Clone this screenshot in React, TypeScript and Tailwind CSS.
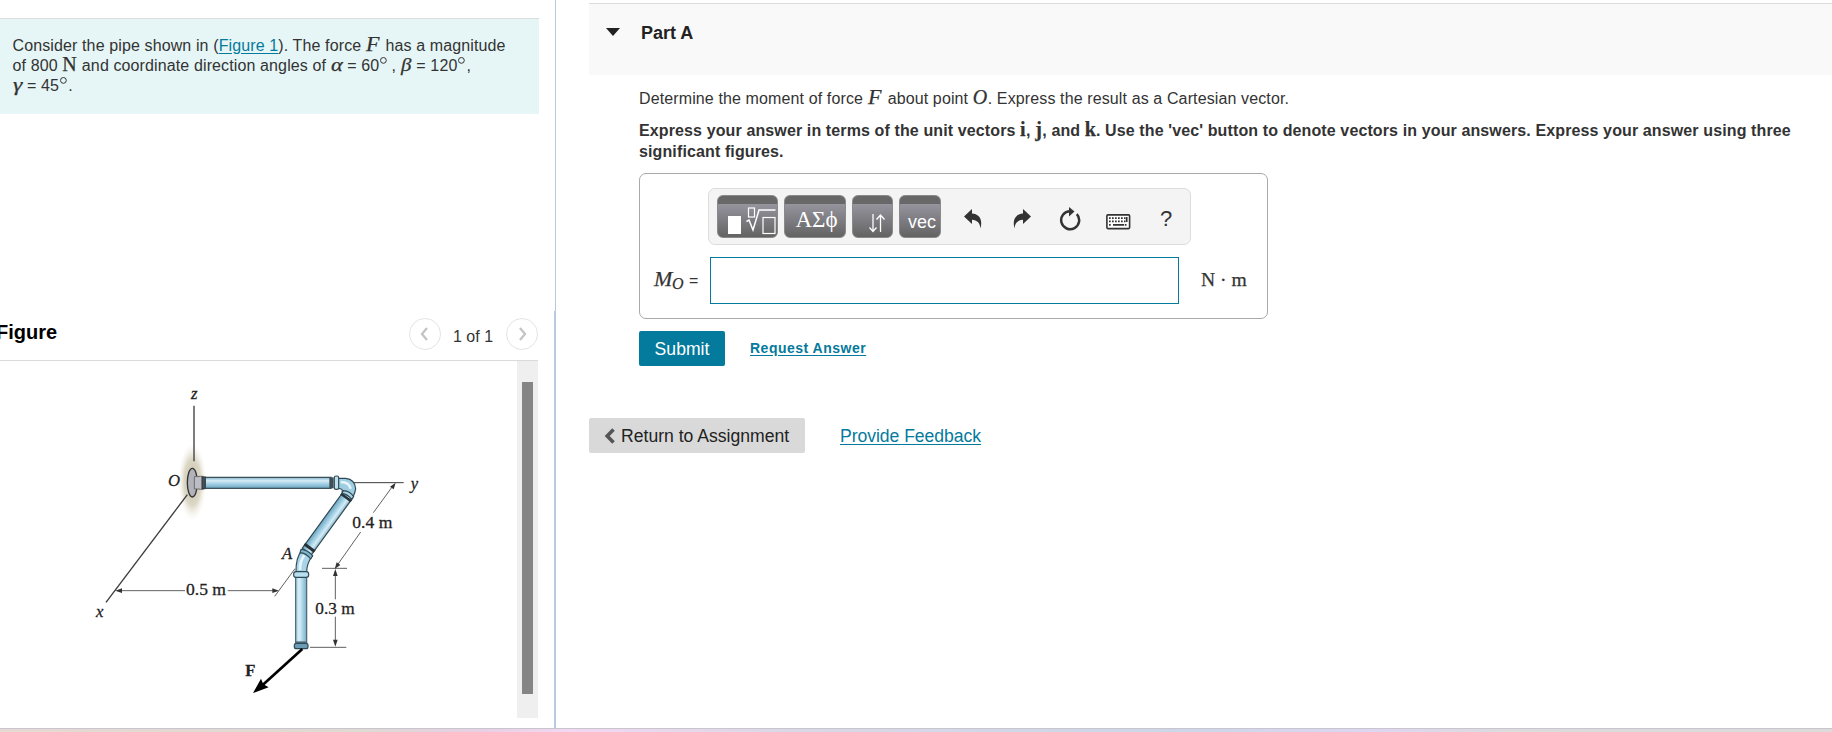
import type { ReactNode } from "react";

interface MathProps { children: ReactNode; className?: string; }

// 수식 글자 (세리프)
function M({ children, className = "" }: MathProps) {
  return (
    <span className={`inline-block whitespace-nowrap leading-[18px] tracking-normal font-['Liberation_Serif',serif] [-webkit-text-stroke:0.25px_#333] ${className}`}>
      {children}
    </span>
  );
}

function Deg() {
  return (
    <svg className="inline-block h-[14px] w-[9px] align-baseline" viewBox="0 0 9 14">
      <circle cx="4.4" cy="3.4" r="2.9" fill="none" stroke="#333" strokeWidth="1" />
    </svg>
  );
}

function PagerButton({ d }: { d: string }) {
  return (
    <button className="flex size-8 items-center justify-center rounded-full border border-[#e4e4e4]">
      <svg width="16" height="16" viewBox="0 0 16 16" fill="none" stroke="#c4c4c4" strokeWidth="2.3">
        <path d={d} />
      </svg>
    </button>
  );
}

function PipeFigure() {
  return (
    <svg width="360" height="340" viewBox="0 0 1080 1020" className="ml-20 mt-[9px] block">
      <defs>
        <linearGradient id="pipeH" x1="0" y1="0" x2="0" y2="1">
          <stop offset="0" stopColor="#7fb2cb" />
          <stop offset="0.3" stopColor="#d6ecf6" />
          <stop offset="0.55" stopColor="#a9d4e8" />
          <stop offset="1" stopColor="#6aa5c1" />
        </linearGradient>
        <linearGradient id="pipeV" x1="0" y1="0" x2="1" y2="0">
          <stop offset="0" stopColor="#9cc9de" />
          <stop offset="0.3" stopColor="#dcf0f8" />
          <stop offset="0.6" stopColor="#aed7e9" />
          <stop offset="1" stopColor="#76aec8" />
        </linearGradient>
        <radialGradient id="wall">
          <stop offset="0" stopColor="#c4bd9f" />
          <stop offset="0.6" stopColor="#d6d1bc" stopOpacity="0.85" />
          <stop offset="1" stopColor="#f0eee4" stopOpacity="0" />
        </radialGradient>
      </defs>

      {/* 벽 음영 */}
      <ellipse cx="337" cy="336" rx="42" ry="116" fill="url(#wall)" />

      {/* 좌표축 */}
      <g stroke="#3c3c3c" strokeWidth="4" fill="none">
        <path d="M342 107V274" />
        <path d="M322 374L78 697" />
        <path d="M820 338H971" strokeWidth="3" />
      </g>

      {/* 치수선 */}
      <g stroke="#555" strokeWidth="2.8" fill="none">
        <path d="M112 662H315M443 662H590" />
        <path d="M645 596L584 679" />
        <path d="M940 346L880 428M842 486L770 588" />
        <path d="M726 595H801M690 832H799" />
        <path d="M766 604V688M766 740V822" />
      </g>
      <g fill="#333">
        <path d="M106 662L126 655V669Z" />
        <path d="M597 662L577 655V669Z" />
        <path d="M947 338L930 350L941 358Z" />
        <path d="M764 597L781 585L770 577Z" />
        <path d="M766 597L759 618H773Z" />
        <path d="M766 830L759 809H773Z" />
      </g>

      {/* 벽 플랜지 */}
      <g stroke="#333" strokeWidth="4">
        <ellipse cx="337" cy="338" rx="15" ry="43" fill="#b2b3ba" />
        <path d="M343 320Q352 320 362 319L370 319V358L362 358Q352 356 343 357Z" fill="#bdbec5" stroke="#6a6c72" strokeWidth="3" />
        <rect x="366" y="321" width="10" height="35" fill="#465259" strokeWidth="3" />
      </g>

      {/* 수평 파이프 */}
      <rect x="376" y="322" width="377" height="33" fill="url(#pipeH)" stroke="#33474f" strokeWidth="3.5" />
      <rect x="748" y="322" width="13" height="33" fill="#3f4f57" />

      {/* 사선 파이프 */}
      <g transform="translate(803 376) rotate(126)">
        <rect x="0" y="-17" width="208" height="34" fill="url(#pipeH)" stroke="#33474f" strokeWidth="3.5" />
        <rect x="4" y="-19" width="8" height="38" fill="#273238" />
        <rect x="190" y="-19" width="9" height="38" fill="#273238" />
      </g>

      {/* 위쪽 엘보 */}
      <g stroke="#2f4a57" strokeWidth="3.5" strokeLinejoin="round">
        <path d="M774 325H797Q825 328 827 356Q826 366 819 381L786 366Q791 356 774 355Z" fill="#9fcee3" />
        <rect x="763" y="318" width="13" height="40" rx="5" fill="#bfe1ef" />
        <path d="M790 362Q810 363 821 380L815 388Q804 373 786 370Z" fill="#a9d3e5" />
      </g>
      <path d="M782 336Q808 337 812 356" fill="none" stroke="#e5f5fb" strokeWidth="8" />

      {/* A 지점 엘보 */}
      <g stroke="#2f4a57" strokeWidth="3.5" strokeLinejoin="round">
        <path d="M665 543Q647 562 648 607H680Q680 580 697 558Z" fill="#a9d4e8" />
        <path d="M663 538Q681 538 698 557L692 567Q678 549 660 548Z" fill="#7fb5cd" />
      </g>
      <path d="M673 556Q659 575 660 600" fill="none" stroke="#e5f5fb" strokeWidth="8" />

      {/* 수직 파이프 */}
      <rect x="647" y="618" width="33" height="205" fill="url(#pipeV)" stroke="#4a6270" strokeWidth="3.5" />
      <rect x="641" y="605" width="45" height="17" rx="7" fill="#b9deed" stroke="#2f4a57" strokeWidth="3.5" />
      <rect x="648" y="814" width="31" height="7" fill="#56717e" />
      <rect x="643" y="820" width="41" height="16" rx="6" fill="#6c9cb4" stroke="#2f4a57" strokeWidth="3.5" />

      {/* 힘 F */}
      <path d="M667 837L548 945" stroke="#000" strokeWidth="8" />
      <path d="M519 969L543 926L550 943L566 952Z" fill="#000" />

      <g fontFamily="'Liberation Serif', serif" fontSize="50" fill="#222" stroke="#222" strokeWidth="0.8">
        <text x="817" y="474" textLength="120" lengthAdjust="spacingAndGlyphs">0.4 m</text>
        <text x="318" y="676" textLength="120" lengthAdjust="spacingAndGlyphs">0.5 m</text>
        <text x="706" y="732" textLength="118" lengthAdjust="spacingAndGlyphs">0.3 m</text>
        <g fontStyle="italic">
          <text x="333" y="87">z</text>
          <text x="264" y="348">O</text>
          <text x="992" y="356">y</text>
          <text x="606" y="566">A</text>
          <text x="48" y="742">x</text>
        </g>
        <text x="496" y="918" fontWeight="bold">F</text>
      </g>
    </svg>
  );
}

const keyClass = "flex h-[43px] items-end overflow-hidden rounded-[6px] border border-[#8a8a8a] bg-[linear-gradient(to_bottom,#686868_0px,#686868_8px,#96949e_8px,#636363_100%)] text-white";

function Toolbar() {
  return (
    <div className="flex h-[57px] w-[483px] items-start rounded-[7px] border border-[#dcdcdc] bg-[#f4f4f4] pl-[8px] pt-[6px] text-[#333]">
      <button className={`${keyClass} w-[61px]`}>
        <svg width="59" height="41" viewBox="0 0 59 41" fill="none" stroke="#fff">
          <rect x="10" y="20" width="13" height="18" fill="#fff" stroke="none" />
          <rect x="30.5" y="12" width="6" height="9" strokeWidth="1.2" />
          <path d="M28.5 25.5L31 24L35 34L41 14H57.5" strokeWidth="1.5" />
          <rect x="45" y="21.5" width="12" height="16" strokeWidth="1.2" />
        </svg>
      </button>
      <button className={`${keyClass} ml-[6px] w-[62px] justify-center pb-[5px] pl-[3px]`}>
        <span className="font-['Liberation_Serif',serif] text-[23px] leading-[24px]">ΑΣϕ</span>
      </button>
      <button className={`${keyClass} ml-[6px] w-[41px]`}>
        <svg width="39" height="41" viewBox="0 0 39 41" fill="none" stroke="#fff" strokeWidth="1.3">
          <path d="M20 18V35M16.5 31.5L20 35.5L23.5 31.5M27.5 36V19M23.5 23.5L27.5 19L31.5 23.5" />
        </svg>
      </button>
      <button className={`${keyClass} ml-[6px] w-[42px] pb-[4px] pl-[8px]`}>
        <span className="font-['Liberation_Sans',sans-serif] text-[18px] leading-[22px]">vec</span>
      </button>
      <svg width="18" height="20" viewBox="0 0 18 20" fill="#333" className="ml-[23px] mt-[14px]">
        <path d="M0 7.5L8 0V4.5C15 5 19 10 16.5 19.5C16 14 13 11 8 10.8V15Z" />
      </svg>
      <svg width="18" height="20" viewBox="0 0 18 20" fill="#333" className="ml-[31px] mt-[14px]">
        <path d="M18 7.5L10 0V4.5C3 5 -1 10 1.5 19.5C2 14 5 11 10 10.8V15Z" />
      </svg>
      <svg width="22" height="24" viewBox="0 0 22 24" className="ml-[28px] mt-[12px]">
        <path d="M17.8 7.1A9 9 0 1 1 11 4.2" fill="none" stroke="#333" strokeWidth="2.5" />
        <path d="M10 0L15.5 4.4L10 9.5Z" fill="#333" />
      </svg>
      <svg width="25" height="16" viewBox="0 0 25 16" className="ml-[25px] mt-[19px]">
        <rect x="0.9" y="0.9" width="22.7" height="13.7" rx="1" fill="#fff" stroke="#333" strokeWidth="1.6" />
        <path d="M3 4.2H19.5M3 7.4H19.5M3 10.8H5.5M18.8 10.8H21.5" stroke="#333" strokeWidth="1.7" strokeDasharray="1.7 1.3" />
        <path d="M7 10.8H18M20.7 3V8" stroke="#333" strokeWidth="1.7" />
      </svg>
      <span className="ml-[29px] mt-[10px] font-['Liberation_Sans',sans-serif] text-[22px] leading-[28px]">?</span>
    </div>
  );
}

export default function App() {
  return (
    <div className="flex h-[732px] w-[1832px] flex-col overflow-hidden bg-white font-['Liberation_Sans',Arial,sans-serif] text-[16px] text-[#333]">
      <div className="flex h-[728px]">
        {/* 왼쪽: 문제 + 그림 */}
        <div className="w-[554px] shrink-0">
          <div className="h-[311px] pt-[18px]">
            <div className="h-[96px] w-[539px] border-t border-[#dadddd] bg-[#e6f6f6] pl-[12.5px] pt-[16px] leading-[20px] tracking-[0.12px]">
              <div className="h-[20px] whitespace-nowrap">
                Consider the pipe shown in (<a className="text-[#047a9c] underline underline-offset-2">Figure 1</a>). The force <M className="w-[15px] origin-left scale-x-110 text-[20px] italic">F</M> has a magnitude
              </div>
              <div className="h-[21px] whitespace-nowrap">
                of 800 <M className="w-[15px] text-[20px]">N</M> and coordinate direction angles of <M className="w-[12px] origin-left scale-x-125 text-[18px] italic">α</M> = 60<Deg />&thinsp;, <M className="w-[11px] origin-left scale-x-110 text-[19px] italic">β</M> = 120<Deg />,
              </div>
              <div className="h-[20px] whitespace-nowrap">
                <M className="w-[10px] origin-left scale-x-125 text-[19px] italic">γ</M> = 45<Deg />.
              </div>
            </div>
          </div>
          <div className="flex h-[50px] w-[538px] justify-between border-b border-[#dadada] pt-[7px]">
            <h2 className="-ml-[4px] mt-[2px] text-[20px] font-bold leading-[24px] text-black">Figure</h2>
            <div className="flex">
              <PagerButton d="M10 2L5 8L10 14" />
              <span className="mx-[12px] mt-[9px] w-[41px] whitespace-nowrap leading-[20px]">1 of 1</span>
              <PagerButton d="M6 2L11 8L6 14" />
            </div>
          </div>
          <div className="flex h-[357px] w-[538px] justify-between">
            <PipeFigure />
            <div className="w-[21px] bg-[#efefef] pl-[5px] pt-[21px]">
              <div className="h-[312px] w-[11px] bg-[#858585]" />
            </div>
          </div>
        </div>

        {/* 구분선 */}
        <div className="flex w-[2px] shrink-0 flex-col items-end">
          <div className="h-[311px] w-px bg-[#b8c9dd]" />
          <div className="w-[2px] flex-1 bg-[#b8cbdf]" />
        </div>

        {/* 오른쪽: Part A */}
        <div className="flex-1 pl-[33px] pt-[3px]">
          <div className="flex h-[72px] border-t border-[#dcdcdc] bg-[#f9f9f9] pl-[17px]">
            <svg width="14" height="8" viewBox="0 0 14 8" className="mt-[24px]"><path d="M0 0H14L7 8Z" fill="#222" /></svg>
            <h1 className="ml-[21px] mt-[18px] text-[18px] font-bold leading-[22px] text-[#222]">Part A</h1>
          </div>
          <div className="pl-[50px]">
            <div className="mt-[13px] h-[20px] whitespace-nowrap leading-[20px] tracking-[0.12px]">
              Determine the moment of force <M className="w-[15.5px] origin-left scale-x-110 text-[20px] italic">F</M> about point <M className="w-[15px] text-[20px] italic">O</M>. Express the result as a Cartesian vector.
            </div>
            <div className="mt-[12px] h-[43px] whitespace-nowrap font-bold leading-[20px] tracking-[0.12px]">
              <div className="h-[22px]">
                Express your answer in terms of the unit vectors <M className="w-[6px] text-[20px]">i</M>, <M className="w-[7px] text-[20px]">j</M>, and <M className="text-[20px]">k</M>. Use the 'vec' button to denote vectors in your answers. Express your answer using three
              </div>
              <div className="h-[21px]">significant figures.</div>
            </div>
            <div className="mt-[10px] h-[146px] w-[629px] rounded-[7px] border border-[#a9a9a9] pt-[14px]">
              <div className="pl-[68px]"><Toolbar /></div>
              <div className="mt-[12px] flex h-[47px] items-center pl-[14px]">
                <div className="flex w-[56px] items-baseline whitespace-nowrap">
                  <M className="w-[18px] origin-left scale-x-110 text-[20px] italic">M</M>
                  <M className="relative top-[3px] w-[12px] text-[16px] italic">O</M>
                  <span className="ml-[5px]">=</span>
                </div>
                <input className="h-[47px] w-[469px] border border-[#047a9c] bg-white outline-none" />
                <M className="-mt-px ml-[22px] text-[19.6px]">N · m</M>
              </div>
            </div>
            <div className="mt-[12px] flex h-[35px]">
              <button className="h-[35px] w-[86px] rounded-[2px] bg-[#047a9c] text-[17.6px] leading-[34px] text-white">Submit</button>
              <a className="ml-[25px] mt-[7px] text-[14px] font-bold leading-[20px] tracking-[0.5px] text-[#047a9c] underline underline-offset-2">Request Answer</a>
            </div>
          </div>
          <div className="mt-[52px] flex h-[35px] text-[17.6px]">
            <button className="flex h-[35px] w-[216px] items-center rounded-[2px] bg-[#d9d9d9] pl-[15px] text-[#222]">
              <svg width="12" height="16" viewBox="0 0 12 16" className="mr-[5px]" fill="none" stroke="#555" strokeWidth="3.6">
                <path d="M9.5 1.5L3.2 8L9.5 14.5" />
              </svg>
              <span className="whitespace-nowrap pt-px">Return to Assignment</span>
            </button>
            <a className="ml-[35px] leading-[36px] tracking-[-0.05px] text-[#047a9c] underline underline-offset-2">Provide Feedback</a>
          </div>
        </div>
      </div>
      <div className="h-[4px] border-t border-[#c9c5ce] bg-[linear-gradient(to_right,#e6d8d5_0%,#dedad4_20%,#e6d0e4_26%,#f2d8f2_31%,#dad8e6_43%,#cbd7e8_64%,#ded6f2_75%,#dcdbdd_82%,#dcdbda_100%)]" />
    </div>
  );
}
